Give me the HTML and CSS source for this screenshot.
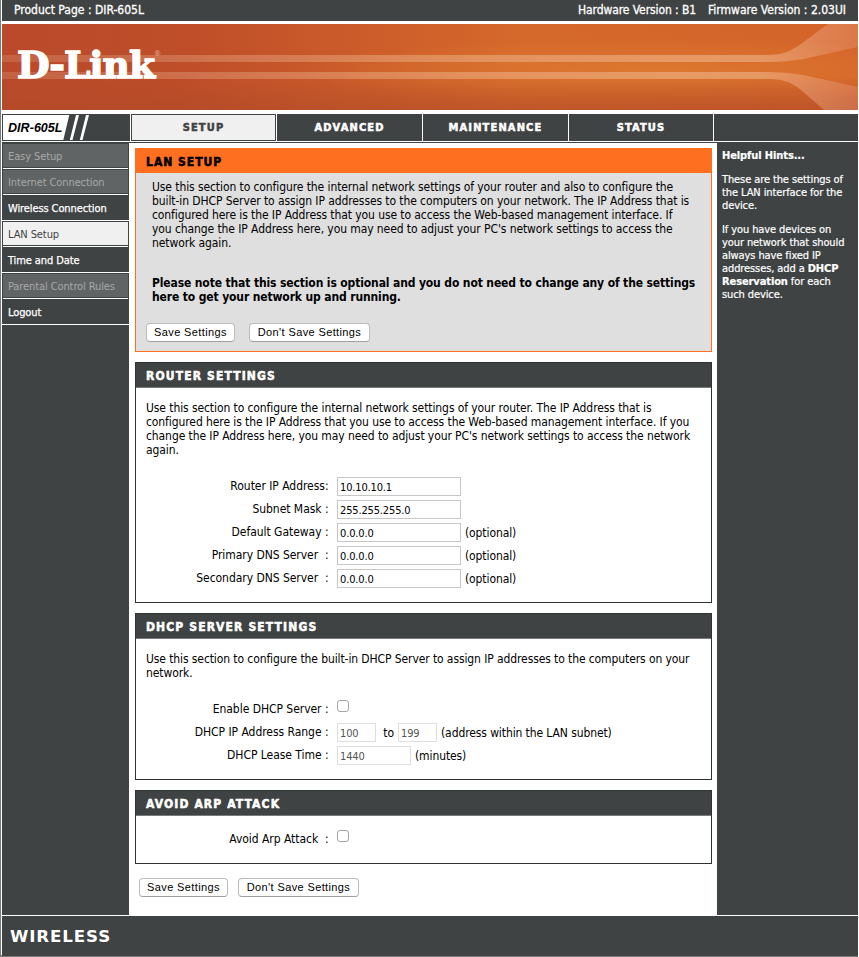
FILE: index.html
```html
<!DOCTYPE html>
<html lang="en">
<head>
<meta charset="utf-8">
<title>D-Link DIR-605L</title>
<link rel="stylesheet" href="styles.css">
</head>
<body>
<div class="frame">
  <header class="top">
    <span>Product Page : DIR-605L</span>
    <span class="push hw">Hardware Version : B1</span>
    <span>Firmware Version : 2.03UI</span>
  </header>

  <svg class="banner" viewBox="0 0 856 86" width="856" height="86">
    <defs>
      <linearGradient id="base" x1="0" x2="1" y1="0" y2="0">
        <stop offset="0" stop-color="#ba4a2b"/>
        <stop offset=".2" stop-color="#be4d29"/>
        <stop offset=".4" stop-color="#cb5b2a"/>
        <stop offset=".6" stop-color="#d5682b"/>
        <stop offset="1" stop-color="#d4642a"/>
      </linearGradient>
      <radialGradient id="glow" cx=".76" cy=".55" r=".4">
        <stop offset="0" stop-color="#de7a30" stop-opacity=".9"/>
        <stop offset="1" stop-color="#de7a30" stop-opacity="0"/>
      </radialGradient>
      <linearGradient id="shade" x1="0" x2="0" y1="0" y2="1">
        <stop offset=".6" stop-color="#b04a28" stop-opacity="0"/>
        <stop offset="1" stop-color="#b04a28" stop-opacity=".6"/>
      </linearGradient>
      <linearGradient id="beam" gradientUnits="userSpaceOnUse" x1="0" x2="856" y1="0" y2="0">
        <stop offset="0" stop-color="#e9b79a" stop-opacity=".22"/>
        <stop offset=".65" stop-color="#f0b48a" stop-opacity=".55"/>
        <stop offset=".88" stop-color="#f0b48a" stop-opacity=".6"/>
        <stop offset="1" stop-color="#eda78a" stop-opacity=".3"/>
      </linearGradient>
    </defs>
    <rect width="856" height="86" fill="url(#base)"/>
    <rect width="856" height="86" fill="url(#glow)"/>
    <rect width="856" height="86" fill="url(#shade)"/>
    <path fill="url(#beam)" d="M0 31H765C779 31 788 28 799 20L826 0H856V23L815 32Q792 38 765 38H0Z"/>
    <path fill="url(#beam)" d="M0 48H765Q792 48 815 54L856 63V86H822L799 66C788 57 779 55 765 55H0Z"/>
    <text class="logo" x="15" y="54" textLength="137" lengthAdjust="spacingAndGlyphs">D-Link</text>
    <text class="reg" x="152.500" y="32">®</text>
  </svg>

  <nav class="nav">
    <div class="model">
      <svg width="128" height="28" viewBox="0 0 128 28">
        <path fill="#fff" d="M1 1H67.300L61.300 26H1ZM74 1H77L70.500 26H67.800ZM84 1H87L80.500 26H77.800Z"/>
        <text class="model-name" x="6" y="18" textLength="54.500">DIR-605L</text>
      </svg>
    </div>
    <div class="tab on">SETUP</div>
    <div class="tab">ADVANCED</div>
    <div class="tab">MAINTENANCE</div>
    <div class="tab last">STATUS</div>
    <div class="rest"></div>
  </nav>

  <div class="columns">
    <aside class="menu">
      <div class="item off">Easy Setup</div>
      <div class="item off">Internet Connection</div>
      <div class="item">Wireless Connection</div>
      <div class="item on">LAN Setup</div>
      <div class="item">Time and Date</div>
      <div class="item off">Parental Control Rules</div>
      <div class="item">Logout</div>
    </aside>

    <main class="content">
      <section class="box intro">
        <h2>LAN SETUP</h2>
        <p>Use this section to configure the internal network settings of your router and also to configure the<br>built-in DHCP Server to assign IP addresses to the computers on your network. The IP Address that is<br>configured here is the IP Address that you use to access the Web-based management interface. If<br>you change the IP Address here, you may need to adjust your PC's network settings to access the<br>network again.</p>
        <p class="note">Please note that this section is optional and you do not need to change any of the settings<br>here to get your network up and running.</p>
        <div class="buttons"><button class="save">Save Settings</button><button class="dont">Don't Save Settings</button></div>
      </section>

      <section class="box router">
        <h2>ROUTER SETTINGS</h2>
        <p>Use this section to configure the internal network settings of your router. The IP Address that is<br>configured here is the IP Address that you use to access the Web-based management interface. If you<br>change the IP Address here, you may need to adjust your PC's network settings to access the network<br>again.</p>
        <div class="row"><label>Router IP Address:</label><input value="10.10.10.1"></div>
        <div class="row"><label>Subnet Mask :</label><input value="255.255.255.0"></div>
        <div class="row"><label>Default Gateway :</label><input value="0.0.0.0"><span class="after">(optional)</span></div>
        <div class="row"><label>Primary DNS Server &nbsp;:</label><input value="0.0.0.0"><span class="after">(optional)</span></div>
        <div class="row"><label>Secondary DNS Server &nbsp;:</label><input value="0.0.0.0"><span class="after">(optional)</span></div>
      </section>

      <section class="box dhcp">
        <h2>DHCP SERVER SETTINGS</h2>
        <p>Use this section to configure the built-in DHCP Server to assign IP addresses to the computers on your<br>network.</p>
        <div class="row check"><label>Enable DHCP Server :</label><input type="checkbox"></div>
        <div class="row"><label>DHCP IP Address Range :</label><input class="short" value="100" disabled><span class="to">to</span><input class="short" value="199" disabled><span class="after">(address within the LAN subnet)</span></div>
        <div class="row"><label>DHCP Lease Time :</label><input class="mid" value="1440" disabled><span class="after">(minutes)</span></div>
      </section>

      <section class="box arp">
        <h2>AVOID ARP ATTACK</h2>
        <div class="row check"><label>Avoid Arp Attack &nbsp;:</label><input type="checkbox"></div>
      </section>

      <div class="buttons bottom"><button class="save">Save Settings</button><button class="dont">Don't Save Settings</button></div>
    </main>

    <aside class="hints">
      <p><b>Helpful Hints...</b></p>
      <p>These are the settings of<br>the LAN interface for the<br>device.</p>
      <p>If you have devices on<br>your network that should<br>always have fixed IP<br>addresses, add a <b>DHCP<br>Reservation</b> for each<br>such device.</p>
    </aside>
  </div>

  <footer class="foot">
    <svg width="110" height="20" viewBox="0 0 110 20"><text class="wireless" x="0" y="15" textLength="101" lengthAdjust="spacingAndGlyphs">WIRELESS</text></svg>
  </footer>
</div>
</body>
</html>
```
FILE: styles.css
```css
* { box-sizing: border-box; }
body {
  margin: 0;
  background: #fff;
  color: #000;
  font: 12px/14px "DejaVu Sans Condensed", "DejaVu Sans", sans-serif;
  letter-spacing: -0.1px;
}
p, h2 { margin: 0; }
.frame {
  width: 858px;
  height: 957px;
  border-left: 1px solid #7b7b7b;
  border-bottom: 2px solid #7b7b7b;
  padding-left: 1px;
}

.top {
  display: flex;
  height: 21px;
  padding: 3px 12px 0 12px;
  background: #404343;
  color: #fff;
  letter-spacing: 0;
  -webkit-text-stroke: .3px #fff;
}
.top .push { margin-left: auto; }
.top .hw { margin-right: 12px; letter-spacing: -.09px; }

.banner { display: block; margin: 3px 0 4px; }
.logo { font: bold 37px "DejaVu Serif", serif; fill: #fff; stroke: #fff; stroke-width: 1.4px; letter-spacing: -1px; }
.reg { font: 8px "Liberation Sans", sans-serif; fill: #e9b9a6; }

.nav {
  display: flex;
  height: 29px;
  border-bottom: 1px solid #404343;
}
.model { width: 128px; height: 27px; background: #404343; margin-right: 1px; overflow: hidden; }
.model-name { font: italic bold 12.5px "Liberation Sans", sans-serif; fill: #000; letter-spacing: 0; }
.tab {
  width: 145px;
  height: 27px;
  margin-right: 1px;
  background: #404343;
  color: #fff;
  font-size: 11px;
  font-weight: bold;
  line-height: 28px;
  text-align: center;
  letter-spacing: 1.15px;
  -webkit-text-stroke: .5px;
}
.tab.on { line-height: 26px; background: #f0f0f0; color: #404343; border: 1px solid #404343; }
.tab.last { width: 144px; }
.rest { flex: 1; height: 27px; background: #404343; }

.columns { display: flex; height: 772px; }
.menu {
  width: 127px;
  background: #404343;
  font-size: 11px;
  line-height: 13px;
}
.item {
  height: 26px;
  padding: 7px 0 0 6px;
  border-bottom: 1px solid #fff;
  color: #fff;
  -webkit-text-stroke: .25px #fff;
}
.item.off, .item.on {
  padding: 6px 0 0 5px;
  border: 1px solid #404343;
  border-bottom: 0;
  background: #606464;
  color: #a8a8a8;
  box-shadow: inset 0 -1px #fff, inset 0 -2px #404343;
  -webkit-text-stroke: 0;
}
.item.on { background: #f0f0f0; color: #404343; }

.content { width: 588px; padding: 5px 5px 0 6px; }
.box {
  border: 1px solid #2f3232;
  margin-bottom: 10px;
  padding-left: 10px;
}
.box h2 {
  height: 25px;
  margin: 0 0 13px -10px;
  padding: 1px 0 0 10px;
  border-bottom: 1px solid #7b7b7b;
  background: #404343;
  color: #fff;
  font-size: 12px;
  line-height: 24px;
  letter-spacing: 1.13px;
  -webkit-text-stroke: .5px;
}
.intro {
  height: 204px;
  border-color: #ff6f20;
  background: #dfdfdf;
}
.intro h2 { height: 24px; margin-bottom: 7px; background: #ff6f20; border: 0; color: #000; letter-spacing: 1px; }
.intro p { padding-left: 6px; letter-spacing: -.09px; }
.intro .note { margin-top: 26px; font-weight: bold; letter-spacing: -.13px; }
.router { height: 241px; }
.router p { margin-bottom: 20px; letter-spacing: -.09px; }
.dhcp { height: 167px; }
.dhcp p { margin-bottom: 18px; }
.arp { height: 74px; }

.row { display: flex; align-items: flex-start; height: 23px; }
.row label { width: 182.500px; margin-right: 8.500px; padding-top: 2px; text-align: right; letter-spacing: -.04px; white-space: nowrap; }
.check { height: 25px; }
.row.check label { padding-top: 4px; }
input {
  width: 124px;
  height: 19px;
  margin: 0;
  padding: 2px 2px 0;
  border: 1px solid #c6c6c6;
  background: #fff;
  color: #000;
  font: 11px "DejaVu Sans Condensed", sans-serif;
  letter-spacing: -.15px;
}
input:disabled { border-color: #dedede; color: #545454; }
.short { width: 39px; }
.mid { width: 74px; }
.to { width: 22px; padding: 3px 4px 0 0; text-align: right; }
.after { padding: 3px 0 0 4px; white-space: nowrap; }
input[type=checkbox] {
  appearance: none;
  width: 12px;
  height: 12px;
  margin-top: 2px;
  padding: 0;
  border: 1px solid #a5a5a5;
  border-radius: 3px;
}
.arp h2 { margin-bottom: 12px; }

.buttons { display: flex; margin-top: 19px; }
button {
  height: 19px;
  padding: 0;
  border: 1px solid #bcbcbc;
  border-bottom-color: #a0a0a0;
  border-radius: 4px;
  background: #fff;
  color: #000;
  font: 11px/17px "Liberation Sans", sans-serif;
  letter-spacing: .38px;
}
.save { width: 89px; margin-right: 14px; }
.dont { width: 121px; }
.bottom { margin: 14px 0 0 4px; }
.bottom .save { margin-right: 10px; }

.hints {
  width: 141px;
  padding: 6px 0 0 5px;
  background: #404343;
  color: #fff;
  font-size: 11px;
  line-height: 13px;
  white-space: nowrap;
  -webkit-text-stroke: .2px #fff;
}
.hints p { margin-bottom: 11px; }

.foot {
  height: 40px;
  margin-top: 1px;
  padding: 11px 0 0 8px;
  background: #404343;
}
.wireless { font: bold 15px "DejaVu Sans", sans-serif; fill: #fff; letter-spacing: .8px; }
```
